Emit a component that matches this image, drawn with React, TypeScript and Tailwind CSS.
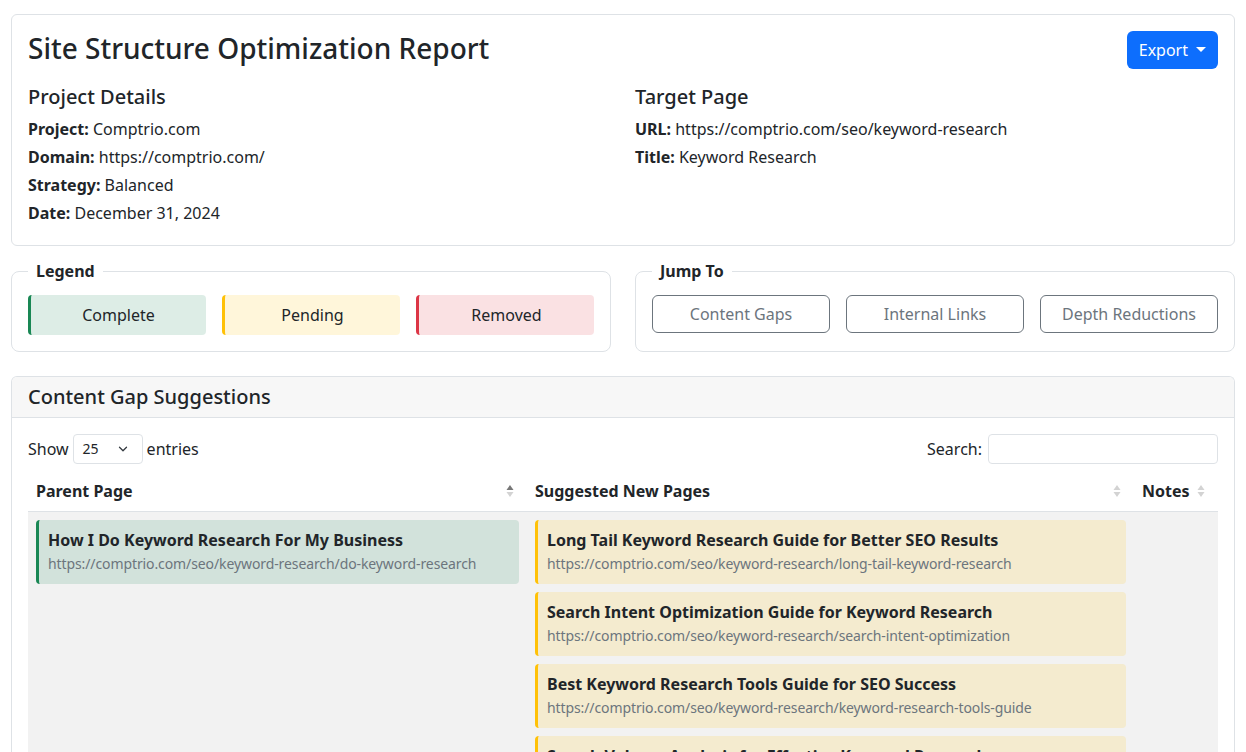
import { ChevronDown } from "lucide-react";

const font = { fontFamily: '"Noto Sans", "Liberation Sans", Arial, sans-serif' };

const suggestions = [
  {
    title: "Long Tail Keyword Research Guide for Better SEO Results",
    url: "https://comptrio.com/seo/keyword-research/long-tail-keyword-research",
  },
  {
    title: "Search Intent Optimization Guide for Keyword Research",
    url: "https://comptrio.com/seo/keyword-research/search-intent-optimization",
  },
  {
    title: "Best Keyword Research Tools Guide for SEO Success",
    url: "https://comptrio.com/seo/keyword-research/keyword-research-tools-guide",
  },
  {
    title: "Search Volume Analysis for Effective Keyword Research",
    url: "https://comptrio.com/seo/keyword-research/search-volume-analysis",
  },
];

function SortIcon({ active }: { active?: boolean }) {
  return (
    <svg width="8" height="16" viewBox="0 0 8 16" className="shrink-0">
      <path d="M4 2 L7.5 7 H0.5 Z" fill={active ? "#777" : "#d3d3d3"} />
      <path d="M4 14 L7.5 9 H0.5 Z" fill="#d3d3d3" />
    </svg>
  );
}

function Detail({ label, value }: { label: string; value: string }) {
  return (
    <p className="mb-1 leading-6">
      <strong className="font-bold">{label}</strong> {value}
    </p>
  );
}

function PageCard({
  title,
  url,
  tone,
}: {
  title: string;
  url: string;
  tone: "green" | "yellow";
}) {
  const cls =
    tone === "green"
      ? "border-[#198754] bg-[rgba(25,135,84,0.15)]"
      : "border-[#ffc107] bg-[rgba(255,193,7,0.15)]";
  return (
    <div className={`mb-2 h-16 rounded border-l-[3px] pl-[9px] pt-[8px] ${cls}`}>
      <div className="text-base font-bold leading-6 text-[#212529]">{title}</div>
      <div className="text-sm leading-6 tracking-[-0.1px] text-[#6c757d]">{url}</div>
    </div>
  );
}

export default function App() {
  return (
    <div className="min-h-screen bg-white px-[11px] pt-[14px] text-base text-[#212529]" style={font}>
      <div className="rounded-md border border-[#dee2e6] px-4 pb-4 pt-4">
        <div className="flex items-start justify-between">
          <h1 className="text-[28px] font-medium leading-[34px]">
            Site Structure Optimization Report
          </h1>
          <button className="flex h-[38px] items-center gap-[8px] rounded-md bg-[#0d6efd] px-3 text-white">
            Export
            <svg width="10" height="6" viewBox="0 0 10 6">
              <path d="M0 0 H10 L5 5 Z" fill="white" />
            </svg>
          </button>
        </div>
        <div className="mt-4 grid grid-cols-2 gap-6">
          <div>
            <h5 className="mb-2 text-xl font-medium leading-6">Project Details</h5>
            <Detail label="Project:" value="Comptrio.com" />
            <Detail label="Domain:" value="https://comptrio.com/" />
            <Detail label="Strategy:" value="Balanced" />
            <Detail label="Date:" value="December 31, 2024" />
          </div>
          <div>
            <h5 className="mb-2 text-xl font-medium leading-6">Target Page</h5>
            <Detail label="URL:" value="https://comptrio.com/seo/keyword-research" />
            <Detail label="Title:" value="Keyword Research" />
          </div>
        </div>
      </div>

      <div className="mt-[15px] grid grid-cols-2 gap-6">
        <fieldset className="rounded-lg border border-[#dee2e6] px-4 pb-4 pt-[14px]">
          <legend className="px-2 font-bold leading-5">Legend</legend>
          <div className="grid grid-cols-3 gap-4">
            <div className="flex h-10 items-center justify-center rounded border-l-[3px] border-[#198754] bg-[rgba(25,135,84,0.15)]">
              Complete
            </div>
            <div className="flex h-10 items-center justify-center rounded border-l-[3px] border-[#ffc107] bg-[rgba(255,193,7,0.15)]">
              Pending
            </div>
            <div className="flex h-10 items-center justify-center rounded border-l-[3px] border-[#dc3545] bg-[rgba(220,53,69,0.15)]">
              Removed
            </div>
          </div>
        </fieldset>
        <fieldset className="rounded-lg border border-[#dee2e6] px-4 pb-4 pt-[14px]">
          <legend className="px-2 font-bold leading-5">Jump To</legend>
          <div className="grid grid-cols-3 gap-4">
            {["Content Gaps", "Internal Links", "Depth Reductions"].map((t) => (
              <button
                key={t}
                className="h-[38px] rounded-md border border-[#6c757d] text-[#6c757d]"
              >
                {t}
              </button>
            ))}
          </div>
        </fieldset>
      </div>

      <div className="mt-[24px] overflow-hidden rounded-t-md border border-b-0 border-[#dee2e6]">
        <div className="border-b border-[#dee2e6] bg-[#f7f7f7] px-4 py-[8px]">
          <h5 className="text-xl font-medium leading-6">Content Gap Suggestions</h5>
        </div>
        <div className="px-4 pt-4">
          <div className="flex items-center justify-between">
            <div className="flex items-center gap-[4px]">
              <span>Show</span>
              <div className="flex h-[30px] w-[70px] items-center justify-between rounded border border-[#dee2e6] pl-[9px] pr-[12px] text-sm">
                25
                <ChevronDown size={14} strokeWidth={2.2} className="text-[#343a40]" />
              </div>
              <span>entries</span>
            </div>
            <div className="flex items-center gap-[6px]">
              <span>Search:</span>
              <div className="h-[30px] w-[230px] rounded border border-[#dee2e6]" />
            </div>
          </div>

          <div className="mt-[7px]">
            <div className="flex h-[41px] items-center border-b border-[#dee2e6] font-bold">
              <div className="flex w-[499px] items-center justify-between pl-2 pr-[13px]">
                Parent Page
                <SortIcon active />
              </div>
              <div className="flex w-[607px] items-center justify-between pl-2 pr-[13px]">
                Suggested New Pages
                <SortIcon />
              </div>
              <div className="flex flex-1 items-center justify-between pl-2 pr-[13px]">
                Notes
                <SortIcon />
              </div>
            </div>
            <div className="flex bg-[#f2f2f2]">
              <div className="w-[499px] p-2">
                <PageCard
                  tone="green"
                  title="How I Do Keyword Research For My Business"
                  url="https://comptrio.com/seo/keyword-research/do-keyword-research"
                />
              </div>
              <div className="w-[607px] p-2">
                {suggestions.map((s) => (
                  <PageCard key={s.url} tone="yellow" title={s.title} url={s.url} />
                ))}
              </div>
              <div className="flex-1 p-2" />
            </div>
          </div>
        </div>
      </div>
    </div>
  );
}
